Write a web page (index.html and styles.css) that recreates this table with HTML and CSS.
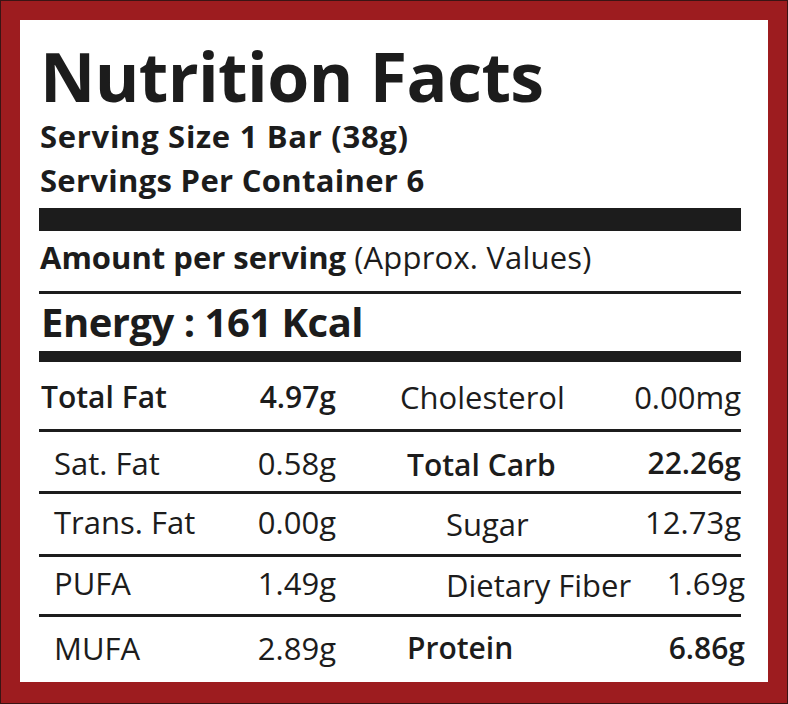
FILE: index.html
```html
<!DOCTYPE html>
<html lang="en">
<head>
<meta charset="utf-8">
<title>Nutrition Facts</title>
<link rel="stylesheet" href="styles.css">
</head>
<body>
<div class="frame">
  <div class="panel">
    <h1 class="title">Nutrition Facts</h1>
    <div class="serving serving-size">Serving Size 1 Bar (38g)</div>
    <div class="serving serving-count">Servings Per Container 6</div>
    <div class="bar bar-thick"></div>
    <div class="amount"><span class="amount-strong">Amount per serving</span> <span class="amount-note">(Approx. Values)</span></div>
    <div class="energy">Energy : 161 Kcal</div>
    <div class="bar bar-mid"></div>
    <div class="table">
      <div class="row row-1">
        <span class="cell label strong">Total Fat</span>
        <span class="cell value strong">4.97g</span>
        <span class="cell label2 medium ind-a">Cholesterol</span>
        <span class="cell value2 medium">0.00mg</span>
      </div>
      <div class="row row-2">
        <span class="cell label sub">Sat. Fat</span>
        <span class="cell value">0.58g</span>
        <span class="cell label2 strong ind-b low">Total Carb</span>
        <span class="cell value2 strong">22.26g</span>
      </div>
      <div class="row row-3">
        <span class="cell label sub">Trans. Fat</span>
        <span class="cell value">0.00g</span>
        <span class="cell label2 ind-c low">Sugar</span>
        <span class="cell value2">12.73g</span>
      </div>
      <div class="row row-4">
        <span class="cell label sub">PUFA</span>
        <span class="cell value">1.49g</span>
        <span class="cell label2 ind-c low">Dietary Fiber</span>
        <span class="cell value2 wide">1.69g</span>
      </div>
      <div class="row row-5">
        <span class="cell label sub">MUFA</span>
        <span class="cell value">2.89g</span>
        <span class="cell label2 strong ind-b">Protein</span>
        <span class="cell value2 strong wide">6.86g</span>
      </div>
    </div>
  </div>
</div>
</body>
</html>
```

FILE: styles.css
```css
* { box-sizing: border-box; }

html, body {
  margin: 0;
  padding: 0;
  background: #ffffff;
}

body {
  font-family: "Open Sans", "Noto Sans", "Liberation Sans", sans-serif;
  color: #1c1c1c;
}

.frame {
  width: 788px;
  height: 704px;
  border: 1px solid #3a1414;
  background: #9d1c1f;
  padding: 19px 19px 21px 19px;
}

.panel {
  width: 100%;
  height: 100%;
  background: #ffffff;
  padding: 20px 27px 0 19px;
  overflow: hidden;
}

.title {
  margin: 0;
  font-size: 68px;
  line-height: 71px;
  height: 70px;
  font-weight: 700;
  letter-spacing: -0.6px;
  padding-left: 1px;
  white-space: nowrap;
}

.serving {
  font-size: 31px;
  font-weight: 700;
  letter-spacing: 0.5px;
  padding-left: 1px;
  white-space: nowrap;
}

.serving-size {
  line-height: 52px;
  height: 54px;
  letter-spacing: 0.7px;
}

.serving-count {
  line-height: 32px;
  height: 34px;
  letter-spacing: 0.3px;
}

.bar {
  background: #1c1c1c;
}

.bar-thick {
  margin-top: 10px;
  height: 23px;
}

.amount {
  font-size: 31px;
  line-height: 52px;
  height: 63px;
  border-bottom: 3px solid #1c1c1c;
  padding-left: 1px;
  white-space: nowrap;
}

.amount-strong {
  font-weight: 700;
}

.amount-note {
  font-weight: 400;
  letter-spacing: 0.2px;
}

.energy {
  font-size: 40px;
  line-height: 55px;
  height: 57px;
  font-weight: 700;
  letter-spacing: -0.5px;
  padding-left: 2px;
  white-space: nowrap;
}

.bar-mid {
  height: 11px;
}

.table {
  display: flex;
  flex-direction: column;
}

.row {
  display: grid;
  grid-template-columns: 214px 83px 1fr auto;
  align-items: start;
  border-bottom: 3px solid #1c1c1c;
  font-size: 31px;
  line-height: 36px;
}

.row-1 { height: 70px; padding-top: 17px; }
.row-2 { height: 62px; padding-top: 13px; }
.row-3 { height: 63px; padding-top: 10px; }
.row-4 { height: 60px; padding-top: 8px; }
.row-5 { height: 65px; padding-top: 13px; border-bottom: none; }

.cell {
  white-space: nowrap;
  font-weight: 400;
}

.label { padding-left: 2px; }
.label.sub { padding-left: 15px; }

.value { text-align: right; }

.label2 { padding-left: 64px; }
.label2.ind-b { padding-left: 71px; }
.label2.ind-c { padding-left: 110px; }
.low { padding-top: 2px; }

.value2 { text-align: right; }
.value2.wide { margin-right: -4px; }

.strong { font-weight: 600; font-size: 30px; }
.medium { font-weight: 500; }
```
